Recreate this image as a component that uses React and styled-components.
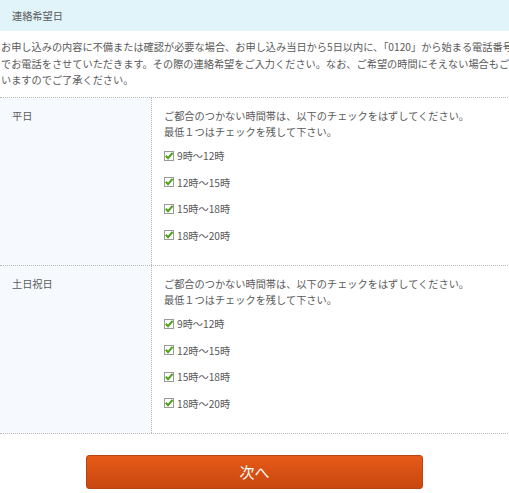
import styled, { createGlobalStyle } from 'styled-components';

const GlobalStyle = createGlobalStyle`
  html, body {
    margin: 0;
    padding: 0;
    background: #fff;
    overflow: hidden;
  }
  body {
    font-family: "Noto Sans CJK JP", "Noto Sans", sans-serif;
    color: #5a5a5a;
    font-size: 10.2px;
  }
`;

const slots = ['9時～12時', '12時～15時', '15時～18時', '18時～20時'];

const days = [
  { label: '平日', id: 'weekday' },
  { label: '土日祝日', id: 'holiday' },
];

const CheckIcon = () => (
  <svg width="10" height="10" viewBox="0 0 10 10">
    <rect x="0.5" y="0.5" width="9" height="9" fill="#fff" stroke="#9a9a9a" />
    <path d="M1.8 4.8 L4 7.2 L8.6 1.8" fill="none" stroke="#4ea316" strokeWidth="2" />
  </svg>
);

const App = () => (
  <Page>
    <GlobalStyle />
    <Heading>連絡希望日</Heading>
    <Intro>
      お申し込みの内容に不備または確認が必要な場合、お申し込み当日から5日以内に、「0120」から始まる電話番号でお電話をさせていただきます。その際の連絡希望をご入力ください。なお、ご希望の時間にそえない場合もございますのでご了承ください。
    </Intro>
    <Table>
      {days.map((day) => (
        <Row key={day.id}>
          <Label>{day.label}</Label>
          <Cell>
            <Note>
              ご都合のつかない時間帯は、以下のチェックをはずしてください。
              <br />
              最低１つはチェックを残して下さい。
            </Note>
            <Checks>
              {slots.map((slot) => (
                <Check key={slot}>
                  <CheckIcon />
                  <span>{slot}</span>
                </Check>
              ))}
            </Checks>
          </Cell>
        </Row>
      ))}
    </Table>
    <Actions>
      <NextButton type="button">次へ</NextButton>
    </Actions>
  </Page>
);

const Page = styled.div`
  width: 509px;
`;

const Heading = styled.h2`
  margin: 0;
  height: 31px;
  padding: 0 12px;
  display: flex;
  align-items: center;
  background: #e1f4fa;
  font-size: 10.2px;
  font-weight: normal;
  color: #5a5a5a;
`;

const Intro = styled.p`
  width: 522px;
  margin: 0;
  padding: 8px 0 8px 1px;
  line-height: 16.5px;
`;

const Table = styled.div`
  width: 530px;
  border-top: 1px dotted #b8b8b8;
`;

const Row = styled.div`
  display: grid;
  grid-template-columns: 152px 1fr;
  height: 167px;
  border-bottom: 1px dotted #b8b8b8;
`;

const Label = styled.div`
  background: #f6fafe;
  border-right: 1px dotted #b8b8b8;
  padding: 10px 12px;
  line-height: 16px;
`;

const Cell = styled.div`
  padding: 10px 12px;
`;

const Note = styled.p`
  margin: 0;
  line-height: 16.5px;
`;

const Checks = styled.div`
  display: flex;
  flex-direction: column;
  gap: 10px;
  margin-top: 7px;
`;

const Check = styled.label`
  display: flex;
  align-items: center;
  gap: 3px;
  height: 16.5px;
  svg {
    flex: none;
  }
`;

const Actions = styled.div`
  display: flex;
  justify-content: center;
  padding: 21px 0 0 0;
  width: 509px;
`;

const NextButton = styled.button`
  width: 337px;
  height: 34px;
  border: 1px solid #b9440f;
  border-radius: 3px;
  background: linear-gradient(#e65a18, #c8470f);
  color: #fff;
  font-family: "Noto Sans CJK JP", "Noto Sans", sans-serif;
  font-size: 15px;
  padding: 0;
  cursor: pointer;
`;

export default App;
